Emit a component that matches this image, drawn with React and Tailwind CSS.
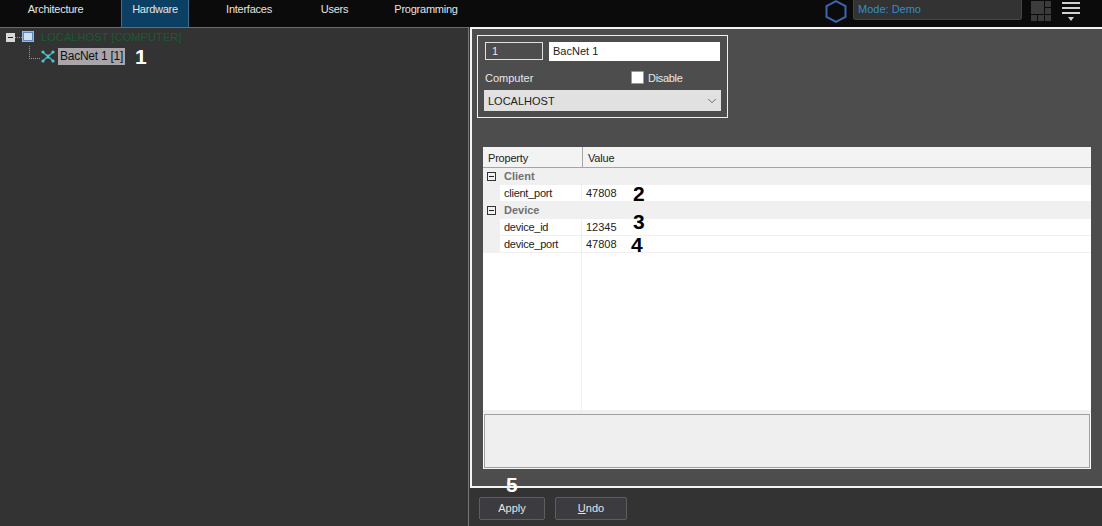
import { ChevronDown } from 'lucide-react';

const tabs = [
  { label: 'Architecture', w: 'w-[111px] mr-[10px]' },
  { label: 'Hardware', w: 'w-[68px]', active: true },
  { label: 'Interfaces', w: 'w-[120px]' },
  { label: 'Users', w: 'w-[51px]' },
  { label: 'Programming', w: 'w-[132px]' },
];

const groups = [
  {
    name: 'Client',
    rows: [{ key: 'client_port', value: '47808', mark: '2', markClass: 'left-[51px] top-[-2px]' }],
  },
  {
    name: 'Device',
    rows: [
      { key: 'device_id', value: '12345', mark: '3', markClass: 'left-[51px] top-[-8px]' },
      { key: 'device_port', value: '47808', mark: '4', markClass: 'left-[49px] top-[-2px]' },
    ],
  },
];

const Minus = ({ className }) => (
  <span className={`flex items-center justify-center border border-[#333] ${className}`}>
    <span className="h-px w-[5px] bg-[#222]" />
  </span>
);

const NetworkIcon = () => (
  <svg width="14" height="13" viewBox="0 0 14 13" fill="none" stroke="#49c6d2" strokeWidth="1.2" className="mx-px">
    <path d="M2 2 L5 5 H9 L12 2 M2 11 L5 8 H9 L12 11 M5 5 L7 6.5 L9 5 M5 8 L7 6.5 L9 8" />
    <circle cx="2" cy="2" r="1.6" fill="#49c6d2" stroke="none" />
    <circle cx="12" cy="2" r="1.6" fill="#49c6d2" stroke="none" />
    <circle cx="2" cy="11" r="1.6" fill="#49c6d2" stroke="none" />
    <circle cx="12" cy="11" r="1.6" fill="#49c6d2" stroke="none" />
  </svg>
);

const App = () => {
  return (
    <div className="flex h-[526px] w-[1102px] flex-col overflow-hidden bg-[#333333] font-['Liberation_Sans',Arial,sans-serif] text-[11px]">
      {/* Top bar */}
      <div className="flex h-[27px] shrink-0 items-stretch bg-[#0b0b0b] text-[#e4e4e4]">
        <div className="flex tracking-[-0.25px]">
          {tabs.map((t) => (
            <div
              key={t.label}
              className={`flex ${t.w} items-start justify-center pt-[1px] ${
                t.active ? 'border-x border-[#3d6f90] bg-[#0b3f63]' : ''
              }`}
            >
              {t.label}
            </div>
          ))}
        </div>
        <div className="ml-auto flex items-start">
          <svg width="24" height="23" viewBox="0 0 24 23" fill="none" className="mr-[5px]">
            <path d="M12 1.2 L21.5 6.2 V16.8 L12 21.8 L2.5 16.8 V6.2 Z" stroke="#3f64ad" strokeWidth="2" />
          </svg>
          <div className="flex h-[20px] w-[169px] items-center rounded-b-[3px] border border-t-0 border-[#444] bg-[#333333] pl-[4px] text-[#2f8fc9]">
            Mode: Demo
          </div>
          <div className="ml-[9px] mt-px grid h-[20px] w-[20px] grid-cols-3 grid-rows-3 gap-px">
            <div className="col-span-2 row-span-2 bg-[#3c3c3c]" />
            <div className="bg-[#3a3a3a]" />
            <div className="bg-[#3a3a3a]" />
            <div className="bg-[#3a3a3a]" />
            <div className="bg-[#3a3a3a]" />
            <div className="bg-[#3a3a3a]" />
          </div>
          <div className="ml-[11px] mr-[22px] mt-[2px] flex w-[18px] flex-col items-center gap-[3px]">
            <div className="h-[2px] w-full bg-[#d0d0d0]" />
            <div className="h-[2px] w-full bg-[#d0d0d0]" />
            <div className="h-[2px] w-full bg-[#d0d0d0]" />
            <div className="h-0 w-0 border-x-[3px] border-t-[4px] border-x-transparent border-t-[#d0d0d0]" />
          </div>
        </div>
      </div>

      <div className="flex min-h-0 flex-1">
        {/* Tree */}
        <div className="relative w-[468px] shrink-0 border-t border-[#6a6a6a] pl-[6px] pt-[2px]">
          <div className="flex h-[14px] items-center">
            <span className="flex h-[9px] w-[9px] items-center justify-center bg-[#d8d8d8]">
              <span className="h-px w-[5px] bg-[#222]" />
            </span>
            <span className="w-[7px] border-t border-dotted border-[#999]" />
            <span className="mb-[2px] flex h-[11px] w-[12px] items-center justify-center border border-[#9db6d8] bg-[#5f88bd]">
              <span className="h-[7px] w-[8px] bg-[#cfe0f2]" />
            </span>
            <span className="ml-[7px] tracking-[0.1px] text-[#1a5a34]">LOCALHOST [COMPUTER]</span>
          </div>
          <div className="mt-[3px] flex h-[18px] items-center pl-[23px]">
            <span className="mb-[8px] h-[13px] w-[11px] border-b border-l border-dotted border-[#999]" />
            <NetworkIcon />
            <span className="ml-[2px] flex h-[17px] items-center bg-[#a9a5aa] px-[2px] text-[12px] tracking-[-0.25px] text-[#111]">
              BacNet 1 [1]
            </span>
            <span className="ml-[10px] text-[21px] font-bold leading-none text-white">1</span>
          </div>
        </div>

        <div className="flex min-w-0 flex-1 flex-col border-l border-[#777] pl-px">
          {/* Settings panel */}
          <div className="flex h-[461px] shrink-0 flex-col border-y-2 border-l-2 border-[#f4f4f4] bg-[#4d4d4d] pb-[17px] pl-[5px] pr-[11px] pt-[6px] text-[#e8e8e8]">
            <div className="h-[83px] w-[251px] border border-[#f0f0f0] px-[7px] pt-[6px]">
              <div className="flex gap-[6px]">
                <div className="flex h-[18px] w-[58px] items-center border border-[#e0e0e0] bg-[#4d4d4d] pl-[6px]">1</div>
                <div className="flex h-[19px] w-[171px] items-center bg-white pl-[4px] text-[#222]">BacNet 1</div>
              </div>
              <div className="mt-[10px] flex h-[15px] items-center">
                <span className="w-[146px]">Computer</span>
                <span className="mb-[2px] h-[13px] w-[13px] rounded-[1px] border border-[#999] bg-white" />
                <span className="ml-[4px] tracking-[-0.3px]">Disable</span>
              </div>
              <div className="-ml-px mt-[4px] flex h-[21px] w-[237px] items-center justify-between bg-[#e1e1e1] pl-[4px] pr-[2px] pt-px text-[#222]">
                LOCALHOST
                <ChevronDown size={14} strokeWidth={1.25} className="text-[#444]" />
              </div>
            </div>

            {/* Property grid */}
            <div className="ml-[6px] mt-[29px] flex min-h-0 flex-1 flex-col bg-white text-[#222]">
              <div className="flex h-[21px] shrink-0 items-center border-b border-[#a5a5a5] bg-[#f3f3f3] pt-[2px] tracking-[-0.2px]">
                <span className="-mt-[2px] flex h-[21px] w-[100px] items-center border-r border-[#a5a5a5] pl-[5px] pt-[2px]">Property</span>
                <span className="pl-[5px]">Value</span>
              </div>
              <div className="flex min-h-0 flex-1 flex-col">
                {groups.map((g) => (
                  <div key={g.name}>
                    <div className="flex h-[17px] items-center bg-[#f0f0f0]">
                      <Minus className="ml-[4px] h-[9px] w-[9px]" />
                      <span className="ml-[8px] font-bold text-[#707070]">{g.name}</span>
                    </div>
                    {g.rows.map((r) => (
                      <div key={r.key} className="flex h-[17px] border-b border-[#f0f0f0]">
                        <span className="w-[17px] bg-[#f0f0f0]" />
                        <span className="flex w-[82px] items-center border-r border-[#f0f0f0] pl-[4px] tracking-[-0.25px]">{r.key}</span>
                        <span className="relative flex flex-1 items-center pl-[4px]">
                          {r.value}
                          <span className={`absolute ${r.markClass} text-[21px] font-bold leading-none text-black`}>
                            {r.mark}
                          </span>
                        </span>
                      </div>
                    ))}
                  </div>
                ))}
                <div className="flex min-h-0 flex-1">
                  <span className="w-[99px] border-r border-[#f0f0f0]" />
                </div>
              </div>
              <div className="h-[4px] shrink-0 bg-[#f0f0f0]" />
              <div className="ml-px mr-px h-[54px] shrink-0 border border-[#a0a0a0] bg-[#efefef]" />
              <div className="h-px shrink-0 bg-[#f5f5f5]" />
            </div>
          </div>

          {/* Buttons */}
          <div className="flex flex-1 items-start gap-[10px] pl-[9px] pt-[9px]">
            <div className="relative flex h-[23px] w-[66px] items-center justify-center rounded-[2px] border border-[#5e5e5e] bg-[#3b3b40] text-[#e4e4e4]">
              Apply
              <span className="absolute left-[26px] top-[-24px] text-[21px] font-bold leading-none text-white">5</span>
            </div>
            <div className="flex h-[23px] w-[72px] items-center justify-center rounded-[2px] border border-[#5e5e5e] bg-[#3b3b40] text-[#e4e4e4]">
              <span><span className="underline">U</span>ndo</span>
            </div>
          </div>
        </div>
      </div>
    </div>
  );
};

export default App;
